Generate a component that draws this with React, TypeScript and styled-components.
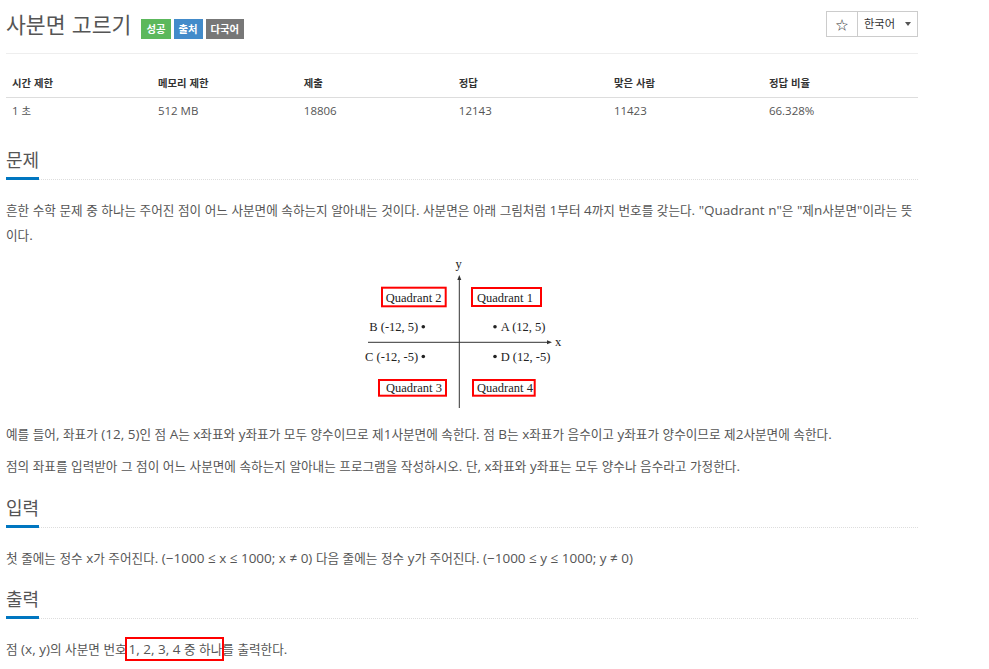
import React from "react";
import styled, { createGlobalStyle } from "styled-components";

const Global = createGlobalStyle`
  html, body { margin: 0; padding: 0; background: #fff; }
  body {
    font-family: "Open Sans", "Noto Sans CJK KR", sans-serif;
    font-feature-settings: "palt";
    color: #555;
    font-size: 14px;
  }
`;

const Han = styled.span<{ $s?: number }>`
  font-size: ${(p) => p.$s ?? 0.9}em;
  line-height: 1;
`;

const HANGUL = /([\uAC00-\uD7A3\u3131-\u318E]+)/;

function K({ children, s }: { children: string; s?: number }) {
  return (
    <>
      {children.split(HANGUL).map((part, i) =>
        i % 2 ? (
          <Han key={i} $s={s}>
            {part}
          </Han>
        ) : (
          part
        )
      )}
    </>
  );
}

const Page = styled.div`
  width: 912px;
  padding: 0 0 0 6px;
`;

const Header = styled.div`
  display: flex;
  justify-content: space-between;
  align-items: flex-start;
  border-bottom: 1px solid #eee;
  height: 54px;
  box-sizing: border-box;
`;

const TitleWrap = styled.div`
  display: flex;
  align-items: baseline;
  padding-top: 7px;
`;

const Title = styled.h1`
  margin: 0 10px 0 0;
  font-size: 24px;
  line-height: 34px;
  font-weight: 400;
  color: #555;
`;

const Label = styled.span<{ $bg: string }>`
  display: inline-block;
  background: ${(p) => p.$bg};
  color: #fff;
  font-size: 11.5px;
  font-weight: 700;
  line-height: 20px;
  height: 20px;
  padding: 0 5px;
  margin-right: 3px;
`;

const BtnGroup = styled.div`
  display: flex;
  margin-top: 11px;
`;

const Btn = styled.div<{ $w: number }>`
  width: ${(p) => p.$w}px;
  height: 26px;
  box-sizing: border-box;
  border: 1px solid #ccc;
  display: flex;
  align-items: center;
  justify-content: center;
  gap: 10px;
  font-size: 12.5px;
  color: #333;
  & + & { margin-left: -1px; }
`;

const Caret = styled.span`
  width: 0;
  height: 0;
  border-left: 3.5px solid transparent;
  border-right: 3.5px solid transparent;
  border-top: 4px solid #555;
`;

const Table = styled.table`
  width: 100%;
  border-collapse: collapse;
  margin-top: 15px;
  font-size: 11.5px;
`;

const Th = styled.th<{ $w: number }>`
  width: ${(p) => p.$w}%;
  text-align: left;
  font-weight: 700;
  color: #333;
  padding: 4px 6px;
  line-height: 20px;
  border-bottom: 1px solid #ddd;
`;

const Td = styled.td`
  padding: 5px 6px 4px;
  line-height: 16px;
  color: #555;
`;

const Section = styled.section<{ $mt: number }>`
  margin-top: ${(p) => p.$mt}px;
`;

const Headline = styled.div`
  border-bottom: 1px dotted #ddd;
  height: 31px;
  margin-bottom: 18px;
`;

const H2 = styled.h2`
  display: inline-block;
  margin: 0;
  font-size: 20px;
  font-weight: 400;
  line-height: 24px;
  padding-bottom: 5px;
  border-bottom: 3px solid #0076c0;
  color: #555;
`;

const P = styled.p`
  margin: 0 0 7px;
  line-height: 25px;
  font-size: 13.5px;
`;

const Figure = styled.div`
  display: flex;
  justify-content: center;
  margin: 5px 0 7px;
`;

const Boxed = styled.span`
  outline: 2px solid #f00;
  padding: 1px 0 1px 2px;
`;

function Diagram() {
  const t = { fontFamily: '"Liberation Serif", "Times New Roman", serif', fontSize: 12.5, fill: "#222" } as const;
  return (
    <svg width={230} height={160} viewBox="347 255 230 160">
      <line x1={459.3} y1={279} x2={459.3} y2={408} stroke="#333" strokeWidth={1} />
      <polygon points="459.3,275 457.3,280 461.3,280" fill="#333" />
      <line x1={368} y1={342.3} x2={548} y2={342.3} stroke="#333" strokeWidth={1} />
      <polygon points="552,342.3 547,340.3 547,344.3" fill="#333" />
      <text x={458.5} y={268} textAnchor="middle" {...t}>y</text>
      <text x={555} y={346} {...t}>x</text>
      <rect x={382} y={287.7} width={63.7} height={18.6} fill="none" stroke="#f00" strokeWidth={2} />
      <rect x={472} y={288} width={69} height={18} fill="none" stroke="#f00" strokeWidth={2} />
      <rect x={379} y={380} width={67} height={15.7} fill="none" stroke="#f00" strokeWidth={2} />
      <rect x={473} y={380} width={61.7} height={15.7} fill="none" stroke="#f00" strokeWidth={2} />
      <text x={385.7} y={301.5} {...t}>Quadrant 2</text>
      <text x={477} y={301.5} {...t}>Quadrant 1</text>
      <text x={386} y={392} {...t}>Quadrant 3</text>
      <text x={477} y={392} {...t}>Quadrant 4</text>
      <text x={369.3} y={331} {...t}>B (-12, 5)</text>
      <circle cx={423.3} cy={326.7} r={1.8} fill="#222" />
      <circle cx={495} cy={326.7} r={1.8} fill="#222" />
      <text x={500.7} y={331} {...t}>A (12, 5)</text>
      <text x={365} y={361} {...t}>C (-12, -5)</text>
      <circle cx={423.3} cy={356.5} r={1.8} fill="#222" />
      <circle cx={495} cy={356.5} r={1.8} fill="#222" />
      <text x={500.7} y={361} {...t}>D (12, -5)</text>
    </svg>
  );
}

const info = [
  ["시간 제한", "1 초", 16],
  ["메모리 제한", "512 MB", 16],
  ["제출", "18806", 17],
  ["정답", "12143", 17],
  ["맞은 사람", "11423", 17],
  ["정답 비율", "66.328%", 17],
] as const;

const PS = 0.935;

export default function App() {
  return (
    <Page>
      <Global />
      <Header>
        <TitleWrap>
          <Title><K>사분면 고르기</K></Title>
          <Label $bg="#5cb85c"><K>성공</K></Label>
          <Label $bg="#428bca"><K>출처</K></Label>
          <Label $bg="#777"><K>다국어</K></Label>
        </TitleWrap>
        <BtnGroup>
          <Btn $w={32}>☆</Btn>
          <Btn $w={61}>
            <K>한국어</K> <Caret />
          </Btn>
        </BtnGroup>
      </Header>
      <Table>
        <thead>
          <tr>
            {info.map(([h, , w]) => (
              <Th key={h} $w={w}><K>{h}</K></Th>
            ))}
          </tr>
        </thead>
        <tbody>
          <tr>
            {info.map(([h, v]) => (
              <Td key={h}><K>{v}</K></Td>
            ))}
          </tr>
        </tbody>
      </Table>
      <Section $mt={25}>
        <Headline>
          <H2><K>문제</K></H2>
        </Headline>
        <P>
          <K s={PS}>흔한 수학 문제 중 하나는 주어진 점이 어느 사분면에 속하는지 알아내는 것이다. 사분면은 아래 그림처럼 1부터 4까지 번호를 갖는다. "Quadrant n"은 "제n사분면"이라는 뜻이다.</K>
        </P>
        <Figure>
          <Diagram />
        </Figure>
        <P>
          <K s={PS}>예를 들어, 좌표가 (12, 5)인 점 A는 x좌표와 y좌표가 모두 양수이므로 제1사분면에 속한다. 점 B는 x좌표가 음수이고 y좌표가 양수이므로 제2사분면에 속한다.</K>
        </P>
        <P><K s={PS}>점의 좌표를 입력받아 그 점이 어느 사분면에 속하는지 알아내는 프로그램을 작성하시오. 단, x좌표와 y좌표는 모두 양수나 음수라고 가정한다.</K></P>
      </Section>
      <Section $mt={17}>
        <Headline>
          <H2><K>입력</K></H2>
        </Headline>
        <P><K s={PS}>첫 줄에는 정수 x가 주어진다. (−1000 ≤ x ≤ 1000; x ≠ 0) 다음 줄에는 정수 y가 주어진다. (−1000 ≤ y ≤ 1000; y ≠ 0)</K></P>
      </Section>
      <Section $mt={16}>
        <Headline>
          <H2><K>출력</K></H2>
        </Headline>
        <P>
          <K s={PS}>점 (x, y)의 사분면 번호</K><Boxed><K s={PS}>1, 2, 3, 4 중 하나</K></Boxed><K s={PS}>를 출력한다.</K>
        </P>
      </Section>
    </Page>
  );
}
